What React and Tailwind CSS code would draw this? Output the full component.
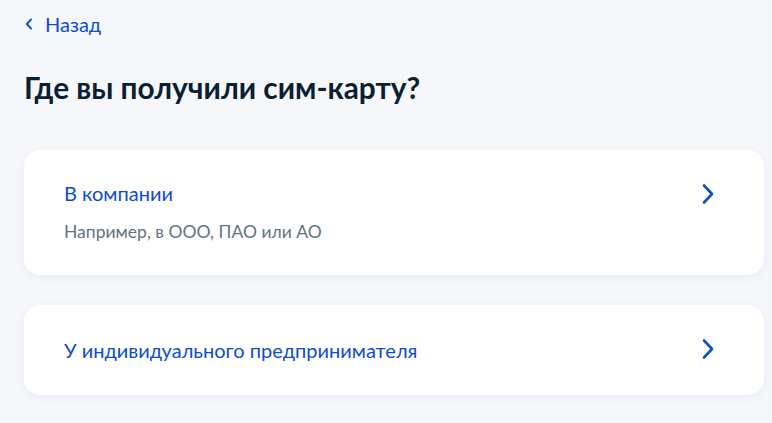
import React from 'react';

function ChevronRight() {
  return (
    <svg width="14" height="22" viewBox="0 0 14 22" fill="none" className="shrink-0">
      <path d="M3 2.5l8 8.5-8 8.5" stroke="#0d4cd3" strokeWidth="2.6" strokeLinecap="round" strokeLinejoin="round" />
    </svg>
  );
}

function Option({ title, hint }) {
  return (
    <div className={`bg-white rounded-2xl shadow-[0_2px_8px_rgba(16,62,155,0.06)] pl-10 pr-[49px] flex items-start justify-between cursor-pointer ${hint ? 'pt-[31px] pb-[31px]' : 'py-[33px]'}`}>
      <div>
        <p className="text-[20px] leading-6 text-[#0d4cd3]">{title}</p>
        {hint && <p className="mt-[15px] text-[17.5px] leading-6 text-[#66727f]">{hint}</p>}
      </div>
      <div className={hint ? 'mt-[2px]' : ''}>
        <ChevronRight />
      </div>
    </div>
  );
}

export default function App() {
  return (
    <div className="min-h-[423px] bg-[#f5f7fb] pl-6 pr-2 pt-3 font-['Lato','Noto_Sans',sans-serif]">
      <a className="flex items-center gap-3 text-[20px] leading-6 text-[#0d4cd3]">
        <svg width="8" height="12" viewBox="0 0 8 12" fill="none" className="ml-[1px]">
          <path d="M6 1.5L1.8 6 6 10.5" stroke="#0d4cd3" strokeWidth="1.9" strokeLinecap="round" strokeLinejoin="round" />
        </svg>
        Назад
      </a>
      <h1 className="mt-[34px] text-[29.8px] leading-9 font-bold text-[#0b1f33]">Где вы получили сим-карту?</h1>
      <div className="mt-[44px] flex flex-col gap-[30px]">
        <Option title="В компании" hint="Например, в ООО, ПАО или АО" />
        <Option title="У индивидуального предпринимателя" />
      </div>
    </div>
  );
}
